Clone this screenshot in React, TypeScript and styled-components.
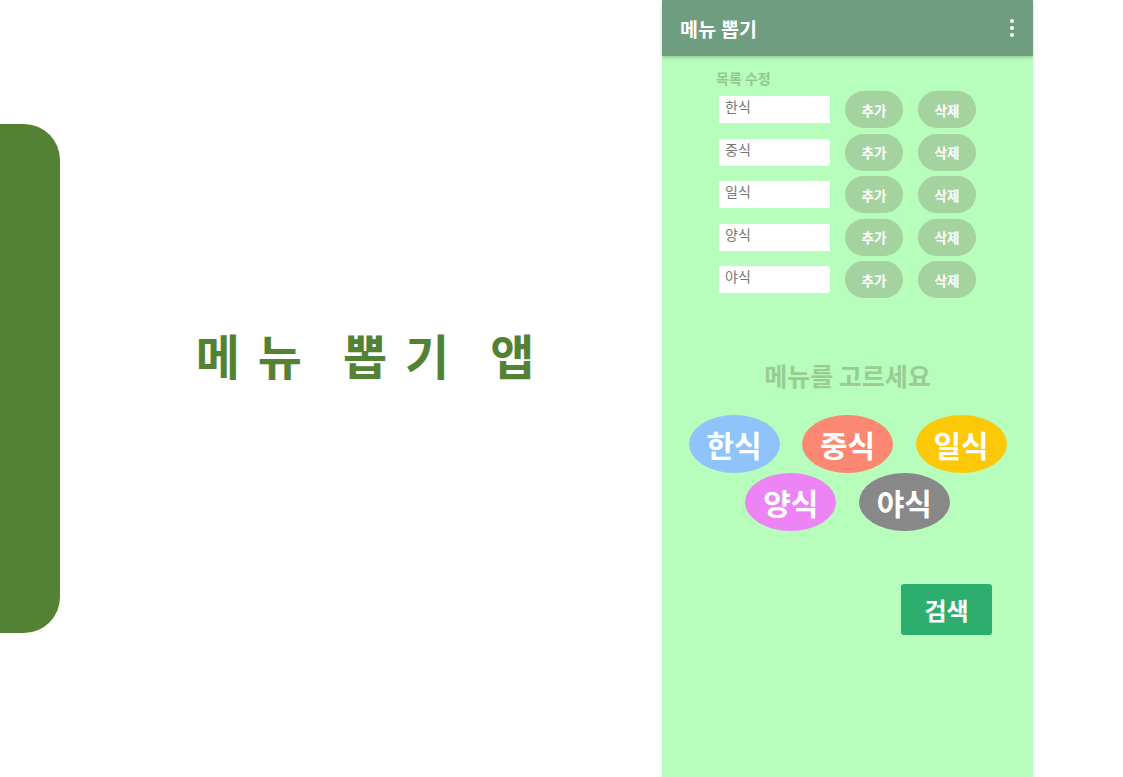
import React from "react";
import styled, { createGlobalStyle } from "styled-components";

const Global = createGlobalStyle`
  html, body { margin: 0; padding: 0; background: #ffffff; }
  body { font-family: "Noto Sans CJK KR", "Noto Sans", sans-serif; }
`;

const Page = styled.div`
  display: flex;
  width: 1123px;
  height: 777px;
  overflow: hidden;
`;

const Left = styled.div`
  flex: 1;
  display: flex;
  align-items: flex-start;
`;

const Bar = styled.div`
  width: 60px;
  height: 509px;
  margin-top: 124px;
  background: #548235;
  border-radius: 0 36px 36px 0;
`;

const TitleArea = styled.div`
  flex: 1;
  display: flex;
  justify-content: center;
  padding-top: 322px;
  padding-left: 26px;
`;

const BigTitle = styled.h1`
  margin: 0;
  font-size: 48px;
  line-height: 64px;
  font-weight: 700;
  color: #548235;
  letter-spacing: 18px;
  word-spacing: -6px;
  white-space: pre;
`;

const Phone = styled.div`
  width: 371px;
  height: 777px;
  margin-right: 90px;
  background: #b7fdbb;
  display: flex;
  flex-direction: column;
`;

const AppBar = styled.div`
  height: 56px;
  flex: none;
  background: #6e9d80;
  box-shadow: 0 2px 3px rgba(0, 0, 0, 0.18);
  display: flex;
  align-items: center;
  justify-content: space-between;
  padding: 0 19px 0 18px;
  position: relative;
  z-index: 1;
`;

const AppTitle = styled.div`
  color: #ffffff;
  font-size: 19.5px;
  font-weight: 700;
  letter-spacing: 0.2px;
`;

const Dots = styled.div`
  display: flex;
  flex-direction: column;
  gap: 3px;
  span {
    width: 4px;
    height: 4px;
    border-radius: 50%;
    background: #ffffff;
  }
`;

const EditSection = styled.div`
  padding: 12px 0 0 54px;
  display: flex;
  flex-direction: column;
`;

const SectionLabel = styled.div`
  font-size: 14px;
  font-weight: 700;
  color: #8fc98d;
  line-height: 21px;
`;

const Rows = styled.div`
  display: flex;
  flex-direction: column;
  gap: 5.5px;
  margin-top: 2px;
`;

const Row = styled.div`
  display: flex;
  align-items: flex-start;
`;

const Field = styled.div`
  width: 111px;
  height: 27px;
  margin: 5px 0 0 3px;
  background: #ffffff;
  box-sizing: border-box;
  padding: 0 6px;
  font-size: 14px;
  line-height: 20px;
  color: #777777;
`;

const Pill = styled.div`
  width: 58px;
  height: 37px;
  margin-left: 15px;
  border-radius: 19px;
  background: #a4d3a0;
  color: #ffffff;
  font-size: 13.5px;
  font-weight: 700;
  display: flex;
  align-items: center;
  justify-content: center;
`;

const Prompt = styled.div`
  margin-top: 60px;
  text-align: center;
  font-size: 25px;
  font-weight: 700;
  color: #99cc95;
  line-height: 34px;
`;

const Choices = styled.div`
  margin-top: 23px;
  padding: 0 26px;
  display: flex;
  flex-wrap: wrap;
  justify-content: center;
  column-gap: 22.5px;
`;

const Oval = styled.div<{ $bg: string }>`
  width: 91px;
  height: 58px;
  border-radius: 50%;
  background: ${(p) => p.$bg};
  color: #ffffff;
  font-size: 30px;
  font-weight: 700;
  display: flex;
  align-items: center;
  justify-content: center;
`;

const Footer = styled.div`
  margin-top: 53px;
  display: flex;
  justify-content: flex-end;
  padding-right: 41px;
`;

const SearchButton = styled.div`
  width: 91px;
  height: 51px;
  border-radius: 3px;
  background: #2eae6e;
  color: #ffffff;
  font-size: 24px;
  font-weight: 700;
  display: flex;
  align-items: center;
  justify-content: center;
`;

const items = ["한식", "중식", "일식", "양식", "야식"];
const colors = ["#8ec4fb", "#fc8873", "#fdc808", "#ec84f6", "#888888"];

export default function App() {
  return (
    <>
      <Global />
      <Page>
        <Left>
          <Bar />
          <TitleArea>
            <BigTitle>메뉴 뽑기 앱</BigTitle>
          </TitleArea>
        </Left>
        <Phone>
          <AppBar>
            <AppTitle>메뉴 뽑기</AppTitle>
            <Dots>
              <span />
              <span />
              <span />
            </Dots>
          </AppBar>
          <EditSection>
            <SectionLabel>목록 수정</SectionLabel>
            <Rows>
              {items.map((it) => (
                <Row key={it}>
                  <Field>{it}</Field>
                  <Pill>추가</Pill>
                  <Pill>삭제</Pill>
                </Row>
              ))}
            </Rows>
          </EditSection>
          <Prompt>메뉴를 고르세요</Prompt>
          <Choices>
            {items.map((it, i) => (
              <Oval key={it} $bg={colors[i]}>
                {it}
              </Oval>
            ))}
          </Choices>
          <Footer>
            <SearchButton>검색</SearchButton>
          </Footer>
        </Phone>
      </Page>
    </>
  );
}
